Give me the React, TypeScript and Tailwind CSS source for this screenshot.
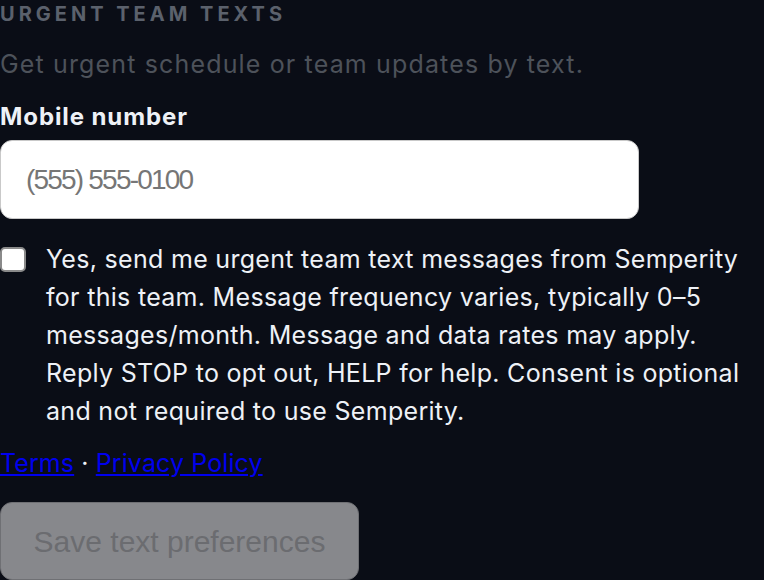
import { useState } from "react";

export default function App() {
  const [phone, setPhone] = useState("");
  const [consent, setConsent] = useState(false);

  const canSave = consent && phone.trim().length > 0;

  return (
    <div className="min-h-screen w-full overflow-hidden bg-[#0a0d16] font-['Inter',sans-serif] text-[#eef1f6]">
      <h2 className="text-[20px] font-bold uppercase leading-[28px] tracking-[0.2em] text-[#5b616c]">
        Urgent team texts
      </h2>
      <p className="mt-[18px] text-[25px] leading-[36px] tracking-[1.15px] text-[#4d525a]">
        Get urgent schedule or team updates by text.
      </p>

      <label
        htmlFor="mobile"
        className="mt-[17px] block text-[24px] font-bold leading-[36px] tracking-[0.9px]"
      >
        Mobile number
      </label>
      <input
        id="mobile"
        type="tel"
        value={phone}
        onChange={(e) => setPhone(e.target.value)}
        placeholder="(555) 555-0100"
        className="mt-[5px] block h-[79px] w-[639px] rounded-[12px] border-[1.5px] border-[#c9c9c9] bg-white px-[25px] font-['Liberation_Sans',Arial,sans-serif] text-[28px] tracking-[-1.8px] text-black placeholder:text-[#767676] outline-none"
      />

      <label className="mt-[21px] flex items-start gap-[20px]">
        <input
          type="checkbox"
          checked={consent}
          onChange={(e) => setConsent(e.target.checked)}
          className="mt-[7px] h-[25px] w-[26px] shrink-0 appearance-none rounded-[5px] border-[2px] border-[#8a8a8a] bg-white checked:bg-[#0a66ff]"
        />
        <span className="text-[25px] leading-[38px] tracking-[0.3px]">
          Yes, send me urgent team text messages from Semperity for this team. Message frequency
          varies, typically 0–5 messages/month. Message and data rates may apply. Reply STOP to opt
          out, HELP for help. Consent is optional and not required to use Semperity.
        </span>
      </label>

      <div className="mt-[15px] text-[25px] leading-[36px] tracking-[0.1px]">
        <a href="#terms" className="text-[#0000ee] underline">
          Terms
        </a>
        {" · "}
        <a href="#privacy" className="text-[#0000ee] underline">
          Privacy Policy
        </a>
      </div>

      <button
        type="button"
        disabled={!canSave}
        className="mt-[21px] h-[78px] w-[359px] rounded-[12px] border-[1.5px] border-[#6f7074] bg-[#87888c] font-['Liberation_Sans',Arial,sans-serif] text-[30px] text-[#6b6c70]"
      >
        Save text preferences
      </button>
    </div>
  );
}
